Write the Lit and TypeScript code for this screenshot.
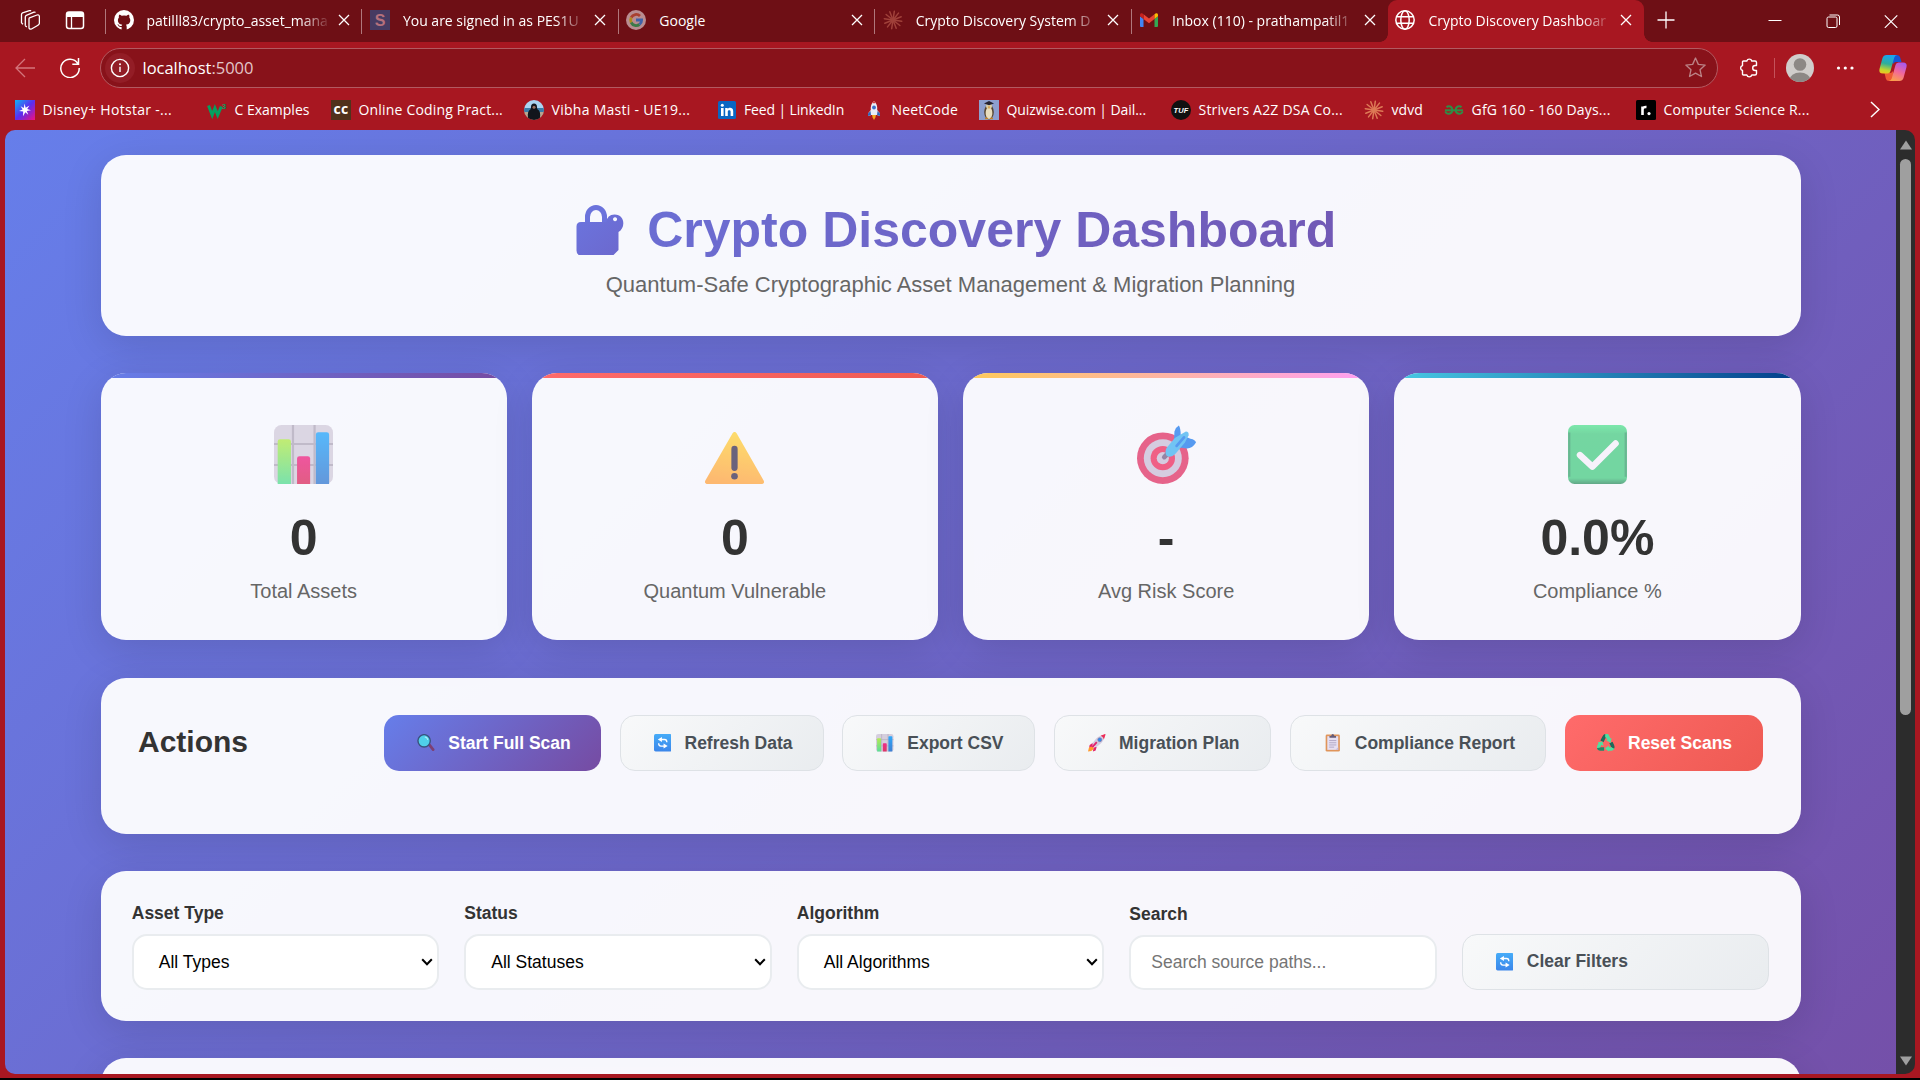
import { LitElement, html, css, svg } from "lit";
import { customElement } from "lit/decorators.js";
import { styleMap } from "lit/directives/style-map.js";

const icon = (box: string, body: unknown, cls = "") =>
  html`<svg class=${cls} viewBox=${box} aria-hidden="true">${body}</svg>`;

const burst = (color: string) =>
  svg`<g stroke=${color} stroke-width="1.5" stroke-linecap="round">${Array.from({ length: 12 }, (_, i) => {
    const a = (i * Math.PI) / 6 + 0.15;
    return svg`<line x1="10" y1="10" x2=${10 + Math.cos(a) * 8.8} y2=${10 + Math.sin(a) * 8.8} />`;
  })}</g>`;

/* ---------- favicons, 20 x 20 ---------- */
const fav: Record<string, unknown> = {
  github: svg`<circle cx="10" cy="10" r="10" fill="#fff"/><path fill="#6e0f15" d="M7.6 20v-3c-2.300.4-2.900-.5-3.300-1.400-.3-.6-.7-1-1.100-1.300.9-.2 1.500.3 1.900.9.6.9 1.300 1.100 2.500.7.1-.6.4-1 .7-1.200-2.500-.3-4.400-1.400-4.400-4.700 0-1.100.4-1.900 1-2.600-.2-.6-.2-1.500.2-2.700 1.100 0 2 .6 2.700 1.100a9 9 0 0 1 4.600 0c.7-.5 1.600-1.100 2.700-1.100.4 1.200.4 2.100.2 2.700.6.7 1 1.500 1 2.600 0 3.300-1.900 4.400-4.400 4.700.4.4.8 1 .8 2V20z"/>`,
  s: svg`<rect width="20" height="20" fill="#463b62"/><text x="10" y="15.500" font-size="16" font-weight="700" font-family="Liberation Sans, sans-serif" text-anchor="middle" fill="#b5717c">S</text>`,
  google: svg`<circle cx="10" cy="10" r="10" fill="#b98d91"/><g fill="none" stroke-width="2.800"><path stroke="#a9402f" d="M5.200 7.500A5.600 5.600 0 0 1 14 6"/><path stroke="#b08a1e" d="M5.200 7.500a5.600 5.600 0 0 0 0 5"/><path stroke="#3c7a48" d="M5.200 12.500a5.600 5.600 0 0 0 8.300 2"/><path stroke="#3f62a8" d="M10 10h5.600a5.600 5.600 0 0 1-2.100 4.500"/></g>`,
  claudeDim: burst("#a0413a"),
  claude: burst("#dd7a56"),
  gmail: svg`<path fill="#4285f4" d="M1.500 17h3V9L1 6.300v9.700z"/><path fill="#34a853" d="M15.500 17h3l.5-1V6.300L15.500 9z"/><path fill="#ea4335" d="M4.500 9V4.300L10 8.500l5.500-4.200V9L10 13.200z"/><path fill="#c5221f" d="M1 6.300V5c0-1.900 2-2.500 3.500-.7V9z"/><path fill="#fbbc04" d="M15.500 9V4.300C17 2.500 19 3.100 19 5v1.300z"/>`,
  globe: svg`<g fill="none" stroke="#fff" stroke-width="1.500"><circle cx="10" cy="10" r="9.200"/><ellipse cx="10" cy="10" rx="4.200" ry="9.200"/><path d="M1.500 6.800h17M1.500 13.200h17"/></g>`,
  hotstar: svg`<defs><linearGradient id="hs" x1="0" y1="0" x2="1" y2="1"><stop offset="0" stop-color="#0db4f5"/><stop offset=".5" stop-color="#5b2df0"/><stop offset="1" stop-color="#f2107c"/></linearGradient></defs><rect width="20" height="20" fill="url(#hs)"/><path fill="#fff" d="M9.500 3.500l1.200 4.300 3.800-2.300-2.300 3.500 3.800 1.200-4.200.9 1.500 3.700-3-2.600-2.300 4 .2-4.600-4.200-.5 3.600-1.700-2-3.200 3.200 1.800z"/>`,
  w3: svg`<path d="M1.500 5.500l3.700 9.500 2.700-7 2.800 7 3.600-8.500" fill="none" stroke="#04a05f" stroke-width="3"/><text x="15" y="9" font-size="7.500" font-weight="700" font-family="Liberation Sans, sans-serif" fill="#04a05f">3</text>`,
  cc: svg`<rect width="20" height="20" fill="#50321c"/><text x="10" y="14.200" font-size="14" font-weight="700" font-family="Open Sans, sans-serif" text-anchor="middle" fill="#fff">cc</text>`,
  person: svg`<defs><clipPath id="pc"><circle cx="10" cy="10" r="10"/></clipPath></defs><g clip-path="url(#pc)"><rect width="20" height="10" fill="#a9d4f2"/><rect y="10" width="20" height="10" fill="#b9a590"/><rect y="8" width="20" height="4" fill="#3b7ca8"/><path fill="#12151c" d="M7 7a3 3.500 0 0 1 6 0c0 2 .6 2.500 2 3.500 1.500 2 1.500 6 .5 9.500h-11c-1-4-1-7.500.6-9.500C6.500 9.500 7 9 7 7z"/><circle cx="10" cy="7.300" r="1.500" fill="#9b7364"/></g>`,
  linkedin: svg`<rect x="1" y="1" width="18" height="18" rx="1.500" fill="#0a66c2"/><circle cx="5.300" cy="5.300" r="1.500" fill="#fff"/><path fill="#fff" d="M4 8h2.600v8H4zM8.200 8h2.500v1.100c.9-1.800 5.500-2 5.500 2V16h-2.600v-4.300c0-2-2.800-1.900-2.800 0V16H8.200z"/>`,
  rocket: svg`<path d="M10 1c3 2.500 3.500 5.500 3.200 9l2.800 3.500V16l-3.300-1H7.300L4 16v-2.500L6.800 10C6.500 6.500 7 3.500 10 1z" fill="#e9eef7"/><path d="M6.500 11L4 13.500V16l3-1zM13.500 11l2.500 2.500V16l-3-1z" fill="#3366b8"/><circle cx="10" cy="7.500" r="1.900" fill="#3b6fc9"/><path d="M8 15h4l-.6 2.500L10 20l-1.400-2.500z" fill="#f4a51c"/><path d="M8.500 3.200A9 9 0 0 1 10 1a9 9 0 0 1 1.500 2.200z" fill="#d33"/>`,
  quiz: svg`<rect width="20" height="20" fill="#8d9fce"/><ellipse cx="10" cy="12" rx="4.800" ry="7.500" fill="#54432e"/><ellipse cx="10" cy="13" rx="3.400" ry="6" fill="#e9ddbd"/><circle cx="10" cy="6" r="3" fill="#d8cda6"/><path d="M5 3.500L10 1l5 2.500-5 1.800z" fill="#252230"/><path d="M9 6.500h2L10 9z" fill="#d98a1f"/><path d="M6 18.500h3M11 18.500h3" stroke="#c88327" stroke-width="1.500"/>`,
  tuf: svg`<circle cx="10" cy="10" r="10" fill="#111"/><text x="10" y="12.600" font-size="7.500" font-style="italic" font-weight="700" font-family="Liberation Sans, sans-serif" text-anchor="middle" fill="#fff">TUF</text>`,
  gfg: svg`<g fill="none" stroke="#2f8d46" stroke-width="2"><path d="M1 10.300h18"/><path d="M2.500 7.300c2-2 5.800-1 5.800 2.700 0 4.600-6.500 4.900-6.800 1.300"/><path d="M17.500 7.300c-2-2-5.800-1-5.800 2.700 0 4.600 6.500 4.900 6.800 1.300"/></g>`,
  roadmap: svg`<rect width="20" height="20" rx="1.500" fill="#000"/><path d="M6.500 15V6.500M6.500 10c0-2.500 1.500-3.200 4-3" fill="none" stroke="#fff" stroke-width="2.600"/><circle cx="13" cy="13.600" r="1.600" fill="#fff"/>`,
};

/* ---------- emoji, 32 x 32 ---------- */
const emoji: Record<string, unknown> = {
  chart: svg`<defs>
      <linearGradient id="cg" x1="0" y1="0" x2="0" y2="1"><stop offset="0" stop-color="#b4ea52"/><stop offset="1" stop-color="#5cdd98"/></linearGradient>
      <linearGradient id="cb" x1="0" y1="0" x2="0" y2="1"><stop offset="0" stop-color="#2fa9fb"/><stop offset="1" stop-color="#3f80d3"/></linearGradient>
      <linearGradient id="cr" x1="0" y1="0" x2="0" y2="1"><stop offset="0" stop-color="#ee2d88"/><stop offset="1" stop-color="#dc3866"/></linearGradient></defs>
    <rect width="32" height="32" rx="4" fill="#d5cedd"/><path d="M10.300 0v32M22 0v32M0 10.300h32M0 21.700h32" stroke="#b3abbd" stroke-width="1.200"/>
    <path d="M2 32V9a1.300 1.300 0 0 1 1.300-1.300h4.600A1.300 1.300 0 0 1 9.200 9v23z" fill="url(#cg)"/>
    <path d="M12.500 32V18.200a1.300 1.300 0 0 1 1.300-1.300h4.500a1.300 1.300 0 0 1 1.300 1.300V32z" fill="url(#cr)"/>
    <path d="M22.700 32V5.200A1.300 1.300 0 0 1 24 3.900h4.600a1.300 1.300 0 0 1 1.300 1.300V32z" fill="url(#cb)"/>`,
  warn: svg`<defs><linearGradient id="wg" x1=".6" y1="0" x2=".4" y2="1"><stop offset="0" stop-color="#ffd748"/><stop offset="1" stop-color="#ffa94e"/></linearGradient></defs>
    <path d="M14.800 4.700c.6-1.200 1.900-1.200 2.500 0l14.500 25.400c.6 1.100 0 1.900-1.200 1.900H1.400C.2 32-.4 31.200.2 30.100z" fill="url(#wg)"/><path d="M16 13v10.200" stroke="#483d5c" stroke-width="3.400" stroke-linecap="round"/><circle cx="16" cy="27.800" r="1.800" fill="#483d5c"/>`,
  target: svg`<circle cx="14" cy="18" r="14" fill="#e23f6e"/><circle cx="14" cy="18" r="10.300" fill="#cdc2da"/><circle cx="14" cy="18" r="6.600" fill="#ee3a68"/><circle cx="14" cy="18" r="3.300" fill="#cdc2da"/>
    <path d="M14.800 17.400l3.400-3.400" stroke="#7d6790" stroke-width="2.600" stroke-linecap="round"/>
    <path d="M20 10l.3-6.500Q21 1.200 22.700.3q1 1.500 1 5L29 7.500q2.700.5 3 2-2 3.300-5 3.200l-5-.7z" fill="#2f84ee"/>
    <path d="M16 12.500L20.500 7l6-3.500q1.800.2 1.500 2L26 9.500l-5 6q-2.300 2.500-4.800 1.300Q14.800 15 16 12.500z" fill="#50b8f2"/><path d="M21.500 11.300l4-4.600" stroke="#2f84ee" stroke-width="1.500" stroke-linecap="round"/>`,
  check: svg`<defs><linearGradient id="kg" x1="0" y1="0" x2="0" y2="1"><stop offset="0" stop-color="#5fe598"/><stop offset=".15" stop-color="#54cf8b"/><stop offset=".9" stop-color="#52ce8b"/><stop offset="1" stop-color="#3d946a"/></linearGradient></defs>
    <rect width="32" height="32" rx="3.500" fill="url(#kg)"/><path d="M.7 4v24M31.300 4v24" stroke="#46a878" stroke-width="1.200"/><path d="M6.500 16.300l6.700 6.300L25.800 10" fill="none" stroke="#f6f1fb" stroke-width="3.500" stroke-linecap="round" stroke-linejoin="round"/>`,
  search: svg`<path d="M22 19l7.500 9.500" stroke="#7d3f73" stroke-width="5" stroke-linecap="round"/><circle cx="13" cy="12.500" r="11.300" fill="#4fd0ea" stroke="#39547f" stroke-width="2.600"/><path d="M15 5.500c2.500.5 4 2.500 4.500 4.500" stroke="#b9f2fa" stroke-width="2" fill="none" stroke-linecap="round"/>`,
  refresh: svg`<defs><linearGradient id="rg" x1="0" y1="0" x2="0" y2="1"><stop offset="0" stop-color="#46acf8"/><stop offset="1" stop-color="#3b86ea"/></linearGradient></defs>
    <rect width="32" height="32" rx="3" fill="url(#rg)"/><g fill="none" stroke="#fff" stroke-width="2.400"><path d="M13 10h6.500q4 0 4 5"/><path d="M19 22h-6.500q-4 0-4-5"/></g><path fill="#fff" d="M14.500 5.500v9L7 10zM17.500 17.500v9L25 22z"/>`,
  rocket: svg`<path d="M9 16l-6 4-1 5 6-1zM16 23l-2 7-5 2 1-7z" fill="#e2246d"/><path d="M2 24l6-1 3 4-5 4-6 1z" fill="#ff9a2e"/><path d="M29 2c-10 1-16 7-21 16l6 6c9-5 15-11 16-20z" fill="#d3cbe0"/><path d="M23 3l8-3c1 0 1 1 .8 2L29 10c-1-4-2-5.500-6-7z" fill="#ee2d57"/><circle cx="21.500" cy="10.500" r="3.600" fill="#2f8bee" stroke="#8578a0" stroke-width="1.200"/><path d="M8 24l8-9" stroke="#e2246d" stroke-width="3.500"/>`,
  clipboard: svg`<rect x="3" y="1" width="26" height="31" rx="2.500" fill="#e0955b"/><path d="M6 4h20v25H6z" fill="#e6dff2"/><path d="M26 24v5h-5z" fill="#c4b8dc"/><path d="M9.500 12h13M9.500 16h13M9.500 20h13M9.500 24h9" stroke="#9f92b6" stroke-width="1.300"/><path d="M10 7V3.500h3Q14 0 16 0t3 3.500h3V7z" fill="#665c78"/>`,
  recycle: svg`<g fill="none" stroke-width="6.400" stroke-linejoin="round"><path d="M9 13.500l4.300-8.500q1-2 3-2" stroke="#1c6b5b"/><path d="M15 3h3.500l3.500 7" stroke="#4fe0a0"/><path d="M25.500 15.500l3 6.500q1 2.500-.5 4" stroke="#1c6b5b"/><path d="M29 25.500q-1 2-3 2h-6" stroke="#4fe0a0"/><path d="M13 27.500H6q-3-.5-3-3" stroke="#1f8a68"/><path d="M3 25q-.3-1 .5-3l3-5.500" stroke="#4fe0a0"/></g>
    <path d="M17 11.500l9.500-4-1.500 9zM21.500 21v11l-7-5.500zM1 15.500l9-2 2 8.500z" fill="#4fe0a0"/>`,
};

@customElement("app-root")
export class AppRoot extends LitElement {
  static styles = css`
    :host {
      display: block;
      width: 1920px;
      height: 1080px;
      overflow: hidden;
      background: #000;
      font-family: "Liberation Sans", Arial, sans-serif;
    }
    * { box-sizing: border-box; }
    svg { display: block; flex: none; }

    .window {
      height: 1078px;
      display: flex;
      flex-direction: column;
      background: #a81721;
      font-family: "Open Sans", "Noto Sans", sans-serif;
      color: #fff;
    }

    /* tab strip */
    .tabs {
      height: 42px;
      flex: none;
      display: flex;
      background: #6e0f15;
      font-size: 14px;
    }
    .strip-tools {
      width: 106px;
      flex: none;
      display: flex;
      gap: 25px;
      padding: 10px 0 0 20px;
    }
    .tool { width: 20px; height: 20px; }
    .tab {
      width: 256.4px;
      flex: none;
      display: flex;
      align-items: center;
      height: 42px;
      padding: 0 0 2px 7.5px;
      position: relative;
    }
    .tab::before {
      content: "";
      position: absolute;
      left: -1px;
      top: 9px;
      width: 1px;
      height: 25px;
      background: #b0777b;
    }
    .tab.active { background: #a81721; border-radius: 9px 9px 0 0; }
    .tab.active::before {
      left: -8px;
      top: 34px;
      width: 8px;
      height: 8px;
      background: radial-gradient(circle at 0 0, transparent 7.5px, #a81721 8px);
    }
    .tab.active::after {
      content: "";
      position: absolute;
      right: -8px;
      top: 34px;
      width: 8px;
      height: 8px;
      background: radial-gradient(circle at 100% 0, transparent 7.5px, #a81721 8px);
    }
    .fav { width: 20px; height: 20px; }
    .tab-title {
      width: 190px;
      margin-left: 13px;
      white-space: nowrap;
    }
    .tab-title.long { mask-image: linear-gradient(90deg, #000 153px, transparent 184px); }
    .x { width: 12px; height: 12px; margin-left: 1.5px; }
    .plus { width: 18px; height: 18px; margin: 11px 0 0 13px; }
    .controls { margin-left: auto; display: flex; gap: 44px; padding: 14px 22px 0 0; }
    .ctl { width: 14px; height: 14px; }

    /* toolbar */
    .toolbar {
      height: 51px;
      flex: none;
      display: flex;
      align-items: center;
      padding-left: 15px;
    }
    .back { width: 20px; height: 20px; }
    .reload { width: 20px; height: 20px; margin-left: 25px; }
    .omnibox {
      width: 1618px;
      height: 40px;
      margin-left: 20px;
      display: flex;
      align-items: center;
      border: 1px solid #b25a61;
      border-radius: 20px;
      background: #88121a;
      padding: 0 11px 0 4px;
      font-size: 16.5px;
    }
    .info { width: 30px; height: 30px; }
    .host { margin-left: 7.5px; letter-spacing: -0.02px; padding-bottom: 1px; }
    .port { color: #e3c6c8; }
    .star { width: 21px; height: 21px; margin-left: auto; }
    .puzzle { width: 20px; height: 22px; margin-left: 21px; }
    .rule { width: 1px; height: 20px; background: #c4525a; margin-left: 15px; }
    .avatar { width: 28px; height: 28px; margin-left: 11px; }
    .dots { width: 18px; height: 18px; margin-left: 21.5px; }
    .copilot { width: 30px; height: 30px; margin-left: 24px; }

    .bookmarks {
      height: 37px;
      flex: none;
      display: flex;
      align-items: center;
      padding: 0 0 4px 15px;
      font-size: 14px;
    }
    .bookmark { display: flex; align-items: center; gap: 7.5px; flex: none; white-space: nowrap; }
    .bookmark-text { position: relative; top: -0.5px; }
    .more { width: 10px; height: 17px; margin-left: 5px; }

    /* page */
    .viewport {
      height: 944px;
      width: 1910px;
      margin-left: 5px;
      flex: none;
      display: flex;
      border-radius: 10px;
      overflow: hidden;
      font-family: "Liberation Sans", Arial, sans-serif;
      color: #333;
    }
    .page {
      width: 1891px;
      height: 944px;
      overflow: hidden;
      padding: 25px 95.5px 0;
      display: flex;
      flex-direction: column;
      gap: 37.5px;
      background: linear-gradient(135deg, #667eea 0%, #764ba2 100%) 0 0 / 100% 1250px;
    }
    .panel {
      flex: none;
      border-radius: 25px;
      background: rgba(255, 255, 255, 0.95);
      box-shadow: 0 10px 40px rgba(0, 0, 0, 0.12);
    }
    .header { height: 180.5px; padding: 37.5px; text-align: center; }
    .title {
      height: 75px;
      margin: 0;
      padding-left: 10px;
      display: flex;
      justify-content: center;
      align-items: center;
      gap: 22.5px;
      font-size: 50px;
      font-weight: 700;
      line-height: 75px;
      background: linear-gradient(135deg, #667eea, #764ba2);
      background-clip: text;
      -webkit-background-clip: text;
      color: transparent;
      white-space: nowrap;
    }
    .lock { width: 50px; height: 50px; }
    .subtitle { margin: 0; font-size: 22px; line-height: 33px; color: #666; }

    .stats { flex: none; display: grid; grid-template-columns: repeat(4, 1fr); gap: 25px; }
    .stat {
      height: 267px;
      overflow: hidden;
      display: flex;
      flex-direction: column;
      align-items: center;
    }
    .bar { height: 5px; width: 100%; }
    .bar.assets { background: linear-gradient(90deg, #667eea, #764ba2); }
    .bar.vuln { background: linear-gradient(90deg, #ff6b6b, #ee5a52); }
    .bar.risk { background: linear-gradient(90deg, #feca57, #ff9ff3); }
    .bar.comp { background: linear-gradient(90deg, #48cae4, #023e8a); }
    .big { width: 59px; height: 59px; margin-top: 47px; opacity: 0.8; }
    .value { font-size: 50px; font-weight: 700; line-height: 60px; margin-top: 23.5px; }
    .label { font-size: 20px; line-height: 30px; margin-top: 8px; color: #666; }

    .actions {
      height: 156px;
      padding: 37.5px;
      display: flex;
      justify-content: space-between;
      align-items: flex-start;
    }
    .actions-title { margin: 0; font-size: 30px; line-height: 54px; font-weight: 700; }
    .buttons { display: flex; gap: 18.75px; }
    .btn {
      height: 56px;
      display: flex;
      align-items: center;
      gap: 13.5px;
      padding: 0 0 0 33px;
      border: 1px solid #dee2e6;
      border-radius: 15px;
      background: linear-gradient(135deg, #f8f9fa, #e9ecef);
      color: #495057;
      font: 700 17.5px/20px "Liberation Sans", Arial, sans-serif;
      white-space: nowrap;
    }
    .btn.primary { border: 0; background: linear-gradient(135deg, #667eea, #764ba2); color: #fff; }
    .btn.danger { border: 0; padding-left: 32px; background: linear-gradient(135deg, #ff6b6b, #ee5a52); color: #fff; }
    .small { width: 17.5px; height: 17.5px; }

    .filters {
      height: 149.5px;
      padding: 31.25px 31.25px 0;
      display: grid;
      grid-template-columns: repeat(5, 1fr);
      gap: 25px;
    }
    .field { display: flex; flex-direction: column; font-size: 17.5px; }
    .field-label { font-weight: 700; line-height: 22px; height: 31.75px; display: block; }
    .control {
      height: 55.5px;
      border: 2px solid #e9ecef;
      border-radius: 15px;
      background: #fff;
      color: #000;
      display: flex;
      align-items: center;
      justify-content: space-between;
      padding: 1px 4px 0 25px;
    }
    .search .field-label { padding-top: 1px; height: 32.75px; }
    .search .control { height: 54.5px; padding: 0 0 0 20px; color: #757575; }
    .chev { width: 12px; height: 8px; }
    .clear { align-self: start; margin-top: 31.75px; height: 55.5px; padding-bottom: 2px; }
    .clear .small { margin-top: 2px; }
    .next { height: 200px; }

    .scroll { width: 19px; background: #2c2c2c; display: flex; flex-direction: column; align-items: center; justify-content: space-between; padding: 10px 0 8px; }
    .arrow { width: 12px; height: 10px; }
    .thumb { width: 11px; height: 556px; border-radius: 6px; background: #9f9f9f; margin: 9px 0 auto; }
  `;

  private tabs = [
    { icon: "github", title: "patilll83/crypto_asset_mana", long: true },
    { icon: "s", title: "You are signed in as PES1U", long: true },
    { icon: "google", title: "Google" },
    { icon: "claudeDim", title: "Crypto Discovery System D", long: true },
    { icon: "gmail", title: "Inbox (110) - prathampatil1", long: true },
    { icon: "globe", title: "Crypto Discovery Dashboar", long: true, active: true },
  ];

  private bookmarks = [
    { icon: "hotstar", text: "Disney+ Hotstar -...", width: 192, spacing: 0.3 },
    { icon: "w3", text: "C Examples", width: 124, spacing: 0 },
    { icon: "cc", text: "Online Coding Pract...", width: 193, spacing: 0.18 },
    { icon: "person", text: "Vibha Masti - UE19...", width: 192.5, spacing: 0.28 },
    { icon: "linkedin", text: "Feed | LinkedIn", width: 147.5, spacing: -0.14 },
    { icon: "rocket", text: "NeetCode", width: 115, spacing: 0.2 },
    { icon: "quiz", text: "Quizwise.com | Dail...", width: 192, spacing: -0.08 },
    { icon: "tuf", text: "Strivers A2Z DSA Co...", width: 193, spacing: 0.2 },
    { icon: "claude", text: "vdvd", width: 80, spacing: 0.05 },
    { icon: "gfg", text: "GfG 160 - 160 Days...", width: 192, spacing: 0.2 },
    { icon: "roadmap", text: "Computer Science R...", width: 229, spacing: 0.2 },
  ];

  private stats = [
    { kind: "assets", icon: "chart", value: "0", label: "Total Assets" },
    { kind: "vuln", icon: "warn", value: "0", label: "Quantum Vulnerable" },
    { kind: "risk", icon: "target", value: "-", label: "Avg Risk Score" },
    { kind: "comp", icon: "check", value: "0.0%", label: "Compliance %" },
  ];

  private actions = [
    { icon: "search", text: "Start Full Scan", width: 216.5, kind: "primary" },
    { icon: "refresh", text: "Refresh Data", width: 204, kind: "" },
    { icon: "chart", text: "Export CSV", width: 193, kind: "" },
    { icon: "rocket", text: "Migration Plan", width: 217, kind: "" },
    { icon: "clipboard", text: "Compliance Report", width: 256.5, kind: "" },
    { icon: "recycle", text: "Reset Scans", width: 198, kind: "danger" },
  ];

  private filters = [
    ["Asset Type", "All Types"],
    ["Status", "All Statuses"],
    ["Algorithm", "All Algorithms"],
  ];

  private renderTabs() {
    return html`<div class="tabs">
      <div class="strip-tools">
        ${icon("0 0 20 20", svg`<g fill="none" stroke="#fff" stroke-width="1.300" stroke-linejoin="round"><path d="M9.500 7.800l7.500-2.800q2-.6 2.400 1.400V13q0 1.500-1.400 2.200L11.500 19q-2 .6-2.500-1V9q0-.8.500-1.200z"/><path d="M5.300 15.800V7q0-1.200 1-1.700L14 2.200q1-.3 1.500.3"/><path d="M5.300 15.800l1.500 1.200M1.500 13V4.500q0-1.200 1-1.700L9.500.6q1-.2 1.500.4"/><path d="M1.500 13l1.500 1.200"/></g>`, "tool")}
        ${icon("0 0 20 20", svg`<rect x="1.500" y="2" width="17" height="16.500" rx="2.500" fill="none" stroke="#fff" stroke-width="1.500"/><path d="M1.500 7V4.500Q1.500 2 4 2h12q2.500 0 2.500 2.500V7z" fill="#fff"/><path d="M6.500 7v11" stroke="#fff" stroke-width="1.300"/>`, "tool")}
      </div>
      ${this.tabs.map((t) => html`<div class="tab ${t.active ? "active" : ""}">
        ${icon("0 0 20 20", fav[t.icon], "fav")}
        <span class="tab-title ${t.long ? "long" : ""}">${t.title}</span>
        ${icon("0 0 12 12", svg`<path d="M1 1l10 10M11 1L1 11" stroke="#fff" stroke-width="1.300"/>`, "x")}
      </div>`)}
      ${icon("0 0 18 18", svg`<path d="M9 .5v17M.5 9h17" stroke="#fff" stroke-width="1.300"/>`, "plus")}
      <div class="controls">
        ${icon("0 0 14 14", svg`<path d="M.5 6.500h13" stroke="#fff"/>`, "ctl")}
        ${icon("0 0 14 14", svg`<g fill="none" stroke="#fff"><rect x="1" y="3" width="10" height="10.500" rx="1.500"/><path d="M3.500 1h8q2 0 2 2v8"/></g>`, "ctl")}
        ${icon("0 0 14 14", svg`<path d="M.8 1.300l12.500 12.500M13.300 1.300L.8 13.800" stroke="#fff" stroke-width="1.200"/>`, "ctl")}
      </div>
    </div>`;
  }

  private renderToolbar() {
    return html`<div class="toolbar">
      ${icon("0 0 20 20", svg`<path d="M20 10H1M10 1L1 10l9 9" fill="none" stroke="#d3757b" stroke-width="1.300"/>`, "back")}
      ${icon("0 0 20 20", svg`<path d="M17.800 5.500A9.200 9.200 0 1 0 19.200 10M18.500 0v6.200h-6.200" fill="none" stroke="#fff" stroke-width="1.500"/>`, "reload")}
      <div class="omnibox">
        ${icon("0 0 30 30", svg`<circle cx="15" cy="15" r="15" fill="#931d26"/><circle cx="15" cy="15" r="8.600" fill="none" stroke="#fff" stroke-width="1.400"/><path d="M15 13.800v5.200" stroke="#fff" stroke-width="1.400"/><circle cx="15" cy="11.300" r="1" fill="#fff"/>`, "info")}
        <span class="host">localhost<span class="port">:5000</span></span>
        ${icon("0 0 20 20", svg`<path d="M10 1l2.700 6 6.500.7-4.900 4.400 1.400 6.500L10 15.300l-5.700 3.300 1.400-6.500L.8 7.700 7.300 7z" fill="none" stroke="#bb8286" stroke-width="1.300" stroke-linejoin="round"/>`, "star")}
      </div>
      ${icon("0 0 20 22", svg`<path d="M4.500 4h3.300a2.600 2.600 0 0 1 5 0H16q1.500 0 1.500 1.500v3h-1.300a2.500 2.500 0 0 0 0 5h1.300v3q0 1.500-1.500 1.500h-3.200a2.600 2.600 0 0 1-5 0H4.500Q3.500 18 3.500 17v-3.500a2.600 2.600 0 0 1 0-5V5q0-1 1-1z" fill="none" stroke="#fff" stroke-width="1.400" stroke-linejoin="round"/>`, "puzzle")}
      <div class="rule"></div>
      ${icon("0 0 28 28", svg`<defs><clipPath id="av"><circle cx="14" cy="14" r="14"/></clipPath></defs><g clip-path="url(#av)"><rect width="28" height="28" fill="#d0cdcb"/><circle cx="14" cy="10.500" r="6.300" fill="#8c8885"/><ellipse cx="14" cy="26" rx="10.500" ry="7.500" fill="#8c8885"/></g>`, "avatar")}
      ${icon("0 0 18 18", svg`<g fill="#fff"><circle cx="2.500" cy="9" r="1.600"/><circle cx="9.300" cy="9" r="1.600"/><circle cx="16" cy="9" r="1.600"/></g>`, "dots")}
      ${icon("0 0 30 30", svg`<defs>
        <linearGradient id="c1" x1=".4" y1="0" x2=".2" y2="1"><stop offset="0" stop-color="#19a5f0"/><stop offset=".45" stop-color="#2fae9b"/><stop offset=".8" stop-color="#c5d62c"/><stop offset="1" stop-color="#f0c420"/></linearGradient>
        <linearGradient id="c2" x1=".7" y1="0" x2=".3" y2="1"><stop offset="0" stop-color="#a858ee"/><stop offset=".5" stop-color="#f2679a"/><stop offset="1" stop-color="#fba04c"/></linearGradient></defs>
        <path d="M13 2h6q2.500 0 3.200 2.500L23.500 9H18q-2 0-2.700 2z" fill="#1656d6"/>
        <path d="M17 28h-6q-2.500 0-3.200-2.500L6.500 20H12q2 0 2.700-2z" fill="#ef5a35"/>
        <path d="M8.500 2H19q-2 0-2.800 2.700L12.500 18Q11.900 20.500 9.500 20.500H5Q.5 20.500 1.500 16L4.500 5Q5.500 2 8.500 2z" fill="url(#c1)"/>
        <path d="M21.500 28H11q2 0 2.800-2.700L17.500 12q.6-2.500 3-2.500H25q4.500 0 3.500 4.500l-3 11q-1 3-4 3z" fill="url(#c2)"/>`, "copilot")}
    </div>`;
  }

  private renderBookmarks() {
    return html`<div class="bookmarks">
      ${this.bookmarks.map((b) => html`<div class="bookmark" style=${styleMap({ width: `${b.width}px`, letterSpacing: `${b.spacing}px` })}>
        ${icon("0 0 20 20", fav[b.icon], "fav")}<span class="bookmark-text">${b.text}</span>
      </div>`)}
      ${icon("0 0 10 17", svg`<path d="M1 1l8 7.500L1 16" fill="none" stroke="#fff" stroke-width="1.500"/>`, "more")}
    </div>`;
  }

  private renderPage() {
    return html`<main class="page">
      <header class="panel header">
        <h1 class="title">
          ${icon("0 0 50 50", svg`<defs><linearGradient id="lk" x1="0" y1="0" x2="1" y2="1"><stop offset="0" stop-color="#6b74de"/><stop offset="1" stop-color="#6c68cd"/></linearGradient></defs>
            <path d="M12.500 18V12a8.500 9.500 0 0 1 17 0v6" fill="none" stroke="#6b73dc" stroke-width="5"/>
            <path fill="url(#lk)" fill-rule="evenodd" d="M6 17h25.500q.5-7.500 8-7.500c11 0 11 14 4 17.500V45l-5.500 5.500H6q-4.500 0-4.500-5V21.500Q1.500 17 6 17zM40 12.300a2 2 0 1 0 .1 0z"/>`, "lock")}
          <span>Crypto Discovery Dashboard</span>
        </h1>
        <p class="subtitle">Quantum-Safe Cryptographic Asset Management &amp; Migration Planning</p>
      </header>
      <section class="stats">
        ${this.stats.map((s) => html`<div class="panel stat">
          <div class="bar ${s.kind}"></div>
          ${icon("0 0 32 32", emoji[s.icon], "big")}
          <div class="value">${s.value}</div>
          <div class="label">${s.label}</div>
        </div>`)}
      </section>
      <section class="panel actions">
        <h2 class="actions-title">Actions</h2>
        <div class="buttons">
          ${this.actions.map((a) => html`<button class="btn ${a.kind}" style=${styleMap({ width: `${a.width}px` })}>
            ${icon("0 0 32 32", emoji[a.icon], "small")}<span>${a.text}</span>
          </button>`)}
        </div>
      </section>
      <section class="panel filters">
        ${this.filters.map(([label, value]) => html`<div class="field">
          <span class="field-label">${label}</span>
          <div class="control"><span>${value}</span>
            ${icon("0 0 12 8", svg`<path d="M1.200 1.200L6 6.200l4.800-5" fill="none" stroke="#000" stroke-width="2"/>`, "chev")}
          </div>
        </div>`)}
        <div class="field search">
          <span class="field-label">Search</span>
          <div class="control"><span>Search source paths...</span></div>
        </div>
        <button class="btn clear">${icon("0 0 32 32", emoji.refresh, "small")}<span>Clear Filters</span></button>
      </section>
      <section class="panel next"></section>
    </main>`;
  }

  render() {
    return html`<div class="window">
      ${this.renderTabs()} ${this.renderToolbar()} ${this.renderBookmarks()}
      <div class="viewport">
        ${this.renderPage()}
        <div class="scroll">
          ${icon("0 0 12 10", svg`<path d="M6 0.500L12 9.500H0z" fill="#9f9f9f"/>`, "arrow")}
          <div class="thumb"></div>
          ${icon("0 0 12 10", svg`<path d="M6 9.500L12 .5H0z" fill="#9f9f9f"/>`, "arrow")}
        </div>
      </div>
    </div>`;
  }
}
